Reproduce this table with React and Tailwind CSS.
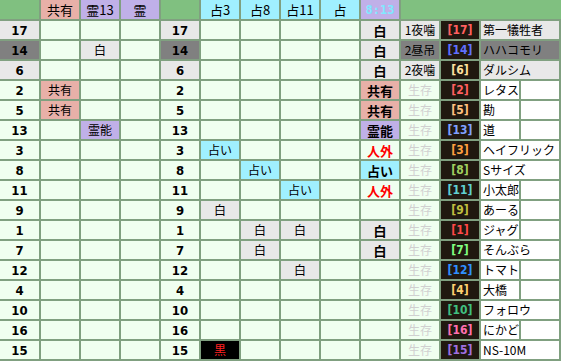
import React from "react";

const C = {
  hd: "bg-[#f0fff0]",
  lg: "bg-[#e8e8e8]",
  dg: "bg-[#808080]",
  pk: "bg-[#e8b0a8]",
  pu: "bg-[#c0b0e8]",
  cy: "bg-[#a0f0ff]",
  bk: "bg-[#000000]",
  wh: "bg-[#ffffff]",
};

// [num, bgNum, col1, col2, col3, col5, col6, col7, col8, col9, status, statusBg, id, idColor, name, nameBg, span]
const rows = [
  { n: 17, nb: "lg", c: [null, null, null], f: [null, null, null, null], r: ["白", "lg", "text-black"], s: ["1夜噛", "lg", "text-black"], id: "#ff6060", name: "第一犠牲者", nameBg: "lg", span: true },
  { n: 14, nb: "dg", c: [null, ["白", "lg"], null], f: [null, null, null, null], r: ["白", "lg", "text-black"], s: ["2昼吊", "dg", "text-black"], id: "#6070ff", name: "ハハコモリ", nameBg: "dg", span: true },
  { n: 6, nb: "lg", c: [null, null, null], f: [null, null, null, null], r: ["白", "lg", "text-black"], s: ["2夜噛", "lg", "text-black"], id: "#ffe0a0", name: "ダルシム", nameBg: "lg", span: true },
  { n: 2, nb: "hd", c: [["共有", "pk"], null, null], f: [null, null, null, null], r: ["共有", "pk", "text-black"], id: "#ff6060", name: "レタス", span: false },
  { n: 5, nb: "hd", c: [["共有", "pk"], null, null], f: [null, null, null, null], r: ["共有", "pk", "text-black"], id: "#ffc080", name: "勘", span: false },
  { n: 13, nb: "hd", c: [null, ["霊能", "pu"], null], f: [null, null, null, null], r: ["霊能", "pu", "text-black"], id: "#80a0ff", name: "道", span: false },
  { n: 3, nb: "hd", c: [null, null, null], f: [["占い", "cy"], null, null, null], r: ["人外", "hd", "text-[#ff0000]"], id: "#ffa040", name: "ヘイフリック", span: true },
  { n: 8, nb: "hd", c: [null, null, null], f: [null, ["占い", "cy"], null, null], r: ["占い", "cy", "text-black"], id: "#a0d060", name: "Sサイズ", span: true },
  { n: 11, nb: "hd", c: [null, null, null], f: [null, null, ["占い", "cy"], null], r: ["人外", "hd", "text-[#ff0000]"], id: "#60d0d0", name: "小太郎", span: false },
  { n: 9, nb: "hd", c: [null, null, null], f: [["白", "lg"], null, null, null], r: ["", "hd", "text-black"], id: "#c0c040", name: "あーる", span: false },
  { n: 1, nb: "hd", c: [null, null, null], f: [null, ["白", "lg"], ["白", "lg"], null], r: ["白", "lg", "text-black"], id: "#ff4848", name: "ジャグ", span: false },
  { n: 7, nb: "hd", c: [null, null, null], f: [null, ["白", "lg"], null, null], r: ["白", "lg", "text-black"], id: "#80ff80", name: "そんぶら", span: true },
  { n: 12, nb: "hd", c: [null, null, null], f: [null, null, ["白", "lg"], null], r: ["", "hd", "text-black"], id: "#3090ff", name: "トマト", span: false },
  { n: 4, nb: "hd", c: [null, null, null], f: [null, null, null, null], r: ["", "hd", "text-black"], id: "#ffd070", name: "大橋", span: false },
  { n: 10, nb: "hd", c: [null, null, null], f: [null, null, null, null], r: ["", "hd", "text-black"], id: "#40c080", name: "フォロウ", span: true },
  { n: 16, nb: "hd", c: [null, null, null], f: [null, null, null, null], r: ["", "hd", "text-black"], id: "#ff70b0", name: "にかど", span: false },
  { n: 15, nb: "hd", c: [null, null, null], f: [["黒", "bk"], null, null, null], r: ["", "hd", "text-black"], id: "#a070e0", name: "NS-10M", span: true },
];

const jp = { fontFamily: '"Noto Sans CJK JP", "DejaVu Sans", sans-serif' };
const num = { fontFamily: '"Liberation Sans Narrow", "DejaVu Sans Condensed", "Liberation Sans", sans-serif' };

function Cell({ bg = "hd", children, className = "", style }) {
  return (
    <div
      className={`${C[bg]} flex items-center justify-center text-[12px] leading-none overflow-hidden whitespace-nowrap ${className}`}
      style={style || jp}
    >
      {children}
    </div>
  );
}

function Mark({ v, red }) {
  if (!v) return <Cell />;
  return (
    <Cell bg={v[1]} className={v[1] === "bk" ? "text-[#ff2020]" : "text-black"}>
      {v[0]}
    </Cell>
  );
}

function NumCell({ n, bg }) {
  return (
    <Cell bg={bg} className="text-black font-bold text-[13px]" style={num}>
      {n}
    </Cell>
  );
}

export default function App() {
  return (
    <div className="w-[561px] h-[361px] overflow-hidden bg-[#80a080]">
      <div className="grid grid-cols-[39px_repeat(13,38px)] grid-rows-[19px_repeat(17,18px)] gap-[2px] pr-[2px] pb-[2px]">
        <div className="bg-[#80c080]" />
        <Cell bg="pk" className="text-black text-[13px]">共有</Cell>
        <Cell bg="pu" className="text-black text-[13px]">霊13</Cell>
        <Cell bg="pu" className="text-black text-[13px]">霊</Cell>
        <div className="bg-[#80c080]" />
        <Cell bg="cy" className="text-black text-[13px]">占3</Cell>
        <Cell bg="cy" className="text-black text-[13px]">占8</Cell>
        <Cell bg="cy" className="text-black text-[13px]">占11</Cell>
        <Cell bg="cy" className="text-black text-[13px]">占</Cell>
        <Cell
          bg="pu"
          className="text-[#80e8ff] font-bold text-[12px]"
          style={{ fontFamily: '"DejaVu Sans Mono", "Liberation Mono", monospace' }}
        >
          8:13
        </Cell>
        <div className="col-span-4 bg-[#80c080] -mr-[2px]" />
        {rows.map((r, i) => (
          <React.Fragment key={i}>
            <NumCell n={r.n} bg={r.nb} />
            <Mark v={r.c[0]} />
            <Mark v={r.c[1]} />
            <Mark v={r.c[2]} />
            <NumCell n={r.n} bg={r.nb} />
            <Mark v={r.f[0]} />
            <Mark v={r.f[1]} />
            <Mark v={r.f[2]} />
            <Mark v={r.f[3]} />
            <Cell bg={r.r[1]} className={`font-bold text-[13px] ${r.r[2]}`}>
              {r.r[0]}
            </Cell>
            {r.s ? (
              <Cell bg={r.s[1]} className="text-black">{r.s[0]}</Cell>
            ) : (
              <Cell bg="hd" className="text-[#d0d0d0]">生存</Cell>
            )}
            <div
              className="bg-[#201810] flex items-center justify-center text-[12px] font-bold leading-none"
              style={{ ...num, color: r.id }}
            >
              [{r.n}]
            </div>
            {r.span ? (
              <div
                className={`${C[r.nameBg || "wh"]} col-span-2 flex items-center pl-[2px] text-[12px] text-black leading-none whitespace-nowrap overflow-hidden`}
                style={jp}
              >
                {r.name}
              </div>
            ) : (
              <>
                <div
                  className={`${C[r.nameBg || "wh"]} flex items-center pl-[2px] text-[12px] text-black leading-none whitespace-nowrap overflow-hidden`}
                  style={jp}
                >
                  {r.name}
                </div>
                <div className="bg-[#ffffff]" />
              </>
            )}
          </React.Fragment>
        ))}
      </div>
    </div>
  );
}
